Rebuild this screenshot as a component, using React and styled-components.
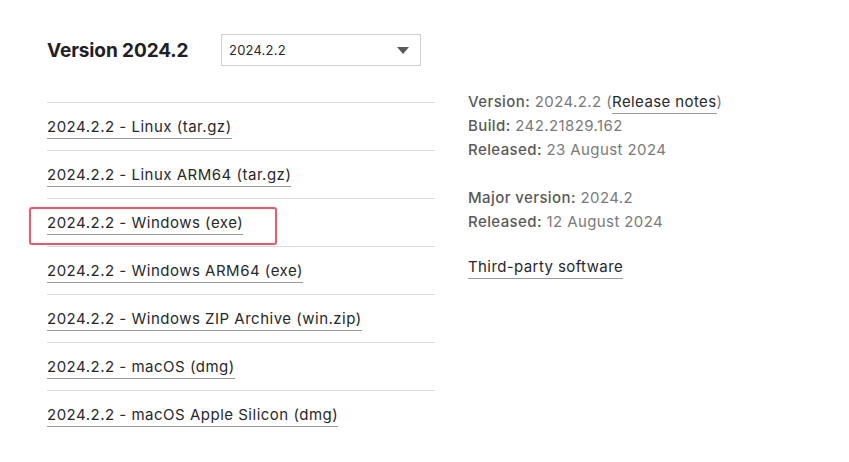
import React from "react";
import styled, { createGlobalStyle } from "styled-components";

const links = [
  "Linux (tar.gz)",
  "Linux ARM64 (tar.gz)",
  "Windows (exe)",
  "Windows ARM64 (exe)",
  "Windows ZIP Archive (win.zip)",
  "macOS (dmg)",
  "macOS Apple Silicon (dmg)",
];

const App = () => {
  return (
    <>
      <GlobalStyle />
      <Page>
        <Header>
          <Title>Version 2024.2</Title>
          <Select>
            <span>2024.2.2</span>
            <Caret />
          </Select>
        </Header>
        <Columns>
          <List>
            {links.map((name) => (
              <Row key={name}>
                <Highlight $active={name === "Windows (exe)"}>
                  <Link>2024.2.2 - {name}</Link>
                </Highlight>
              </Row>
            ))}
          </List>
          <Info>
            <Block>
              <Line>
                <Label>Version:</Label> 2024.2.2 (<InfoLink>Release notes</InfoLink>)
              </Line>
              <Line>
                <Label>Build:</Label> 242.21829.162
              </Line>
              <Line>
                <Label>Released:</Label> 23 August 2024
              </Line>
            </Block>
            <Block>
              <Line>
                <Label>Major version:</Label> 2024.2
              </Line>
              <Line>
                <Label>Released:</Label> 12 August 2024
              </Line>
            </Block>
            <Block>
              <Line>
                <InfoLink>Third-party software</InfoLink>
              </Line>
            </Block>
          </Info>
        </Columns>
      </Page>
    </>
  );
};

export default App;

const GlobalStyle = createGlobalStyle`
  body {
    margin: 0;
    background: #fff;
    font-family: Inter, "Noto Sans", sans-serif;
  }
`;

const Page = styled.div`
  width: 849px;
  height: 462px;
  padding: 34px 0 0 47px;
  box-sizing: border-box;
  overflow: hidden;
`;

const Header = styled.div`
  display: flex;
  align-items: center;
  height: 32px;
`;

const Title = styled.h2`
  margin: 0;
  width: 174px;
  font-size: 19px;
  font-weight: 700;
  color: #1f2024;
  letter-spacing: -0.1px;
`;

const Select = styled.div`
  width: 200px;
  height: 32px;
  box-sizing: border-box;
  border: 1px solid #cfcfcf;
  display: flex;
  align-items: center;
  justify-content: space-between;
  padding: 0 11px 0 7px;
  font-size: 13px;
  color: #27282c;
  letter-spacing: 0.2px;
`;

const Caret = styled.span`
  width: 0;
  height: 0;
  border-left: 6px solid transparent;
  border-right: 6px solid transparent;
  border-top: 7px solid #5a5a5a;
`;

const Columns = styled.div`
  display: flex;
  margin-top: 36px;
  gap: 33px;
`;

const List = styled.div`
  width: 388px;
  border-top: 1px solid #dcdcdc;
`;

const Row = styled.div`
  height: 48px;
  display: flex;
  align-items: center;
  border-bottom: 1px solid #dcdcdc;
  box-sizing: border-box;

  &:last-child {
    border-bottom: none;
  }
`;

const Highlight = styled.div`
  margin: 6px 0 0 -18px;
  padding: 3px 16px 10px 16px;
  width: ${(p) => (p.$active ? "248px" : "auto")};
  box-sizing: border-box;
  border: 2px solid ${(p) => (p.$active ? "#f2566b" : "transparent")};
  border-radius: 3px;
`;

const Link = styled.span`
  font-size: 15px;
  color: #27282c;
  letter-spacing: 0.5px;
  border-bottom: 1px solid #9a9a9a;
  padding-bottom: 2px;
  line-height: 20px;
`;

const Info = styled.div`
  margin-top: -12px;
  font-size: 15px;
  color: #7a7a7a;
  letter-spacing: 0.4px;
`;

const Block = styled.div`
  margin-bottom: 24px;

  &:nth-child(2) {
    margin-bottom: 21px;
  }
`;

const Line = styled.div`
  line-height: 24px;
`;

const Label = styled.span`
  color: #595959;
  font-weight: 500;
`;

const InfoLink = styled.span`
  color: #27282c;
  border-bottom: 1px solid #9a9a9a;
  padding-bottom: 2px;
`;
